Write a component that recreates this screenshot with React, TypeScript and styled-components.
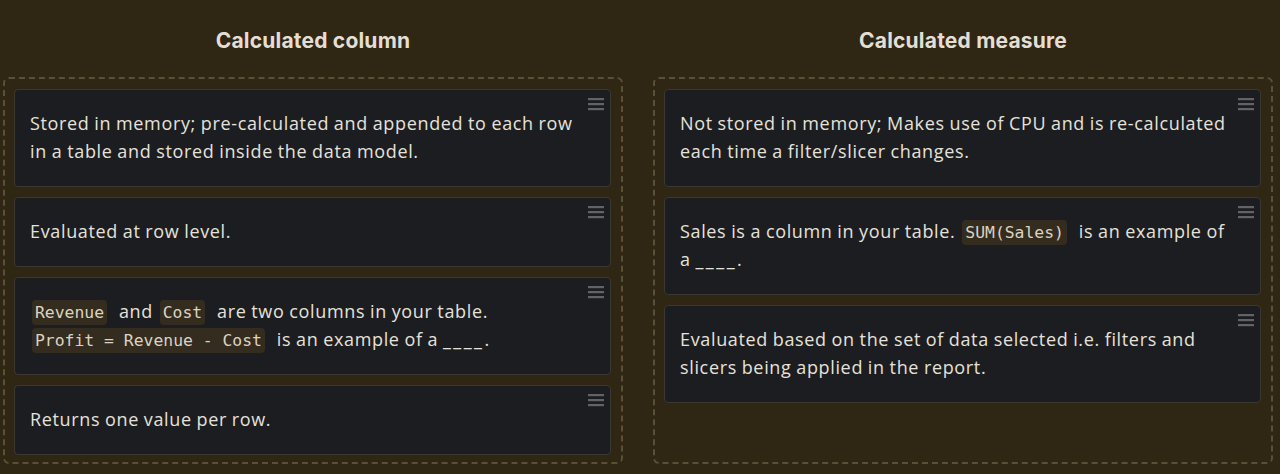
import React from "react";
import styled, { createGlobalStyle } from "styled-components";

const Global = createGlobalStyle`
  html, body { margin: 0; padding: 0; background: #2f2714; }
  body { width: 1280px; height: 474px; overflow: hidden; }
`;

const Page = styled.div`
  display: grid;
  grid-template-columns: 620px 620px;
  column-gap: 30px;
  padding: 0 7px 0 3px;
  box-sizing: border-box;
  width: 1280px;
  height: 474px;
  background: #2f2714;
  font-family: "Open Sans", "Noto Sans", sans-serif;
`;

const Column = styled.section`
  display: flex;
  flex-direction: column;
`;

const Heading = styled.h2`
  margin: 0;
  height: 77px;
  padding-top: 28px;
  box-sizing: border-box;
  text-align: center;
  font-family: Inter, "Noto Sans", sans-serif;
  font-weight: 700;
  font-size: 21px;
  line-height: 26px;
  letter-spacing: 0.2px;
  color: #e4dfd4;
`;

const DropZone = styled.div`
  border: 2px dashed #5a4f37;
  border-radius: 6px;
  padding: 10px 10px 9px 9px;
  height: 387px;
  box-sizing: border-box;
  display: flex;
  flex-direction: column;
  gap: 10px;
`;

const Card = styled.div`
  position: relative;
  background: #1c1d20;
  border: 1px solid #3a3830;
  border-radius: 4px;
  padding: 19px 24px 21px 15px;
  color: #e6e2da;
  font-size: 18px;
  letter-spacing: 0.65px;
  word-spacing: -0.5px;
  line-height: 28px;
`;

const Handle = styled.svg`
  position: absolute;
  top: 7px;
  right: 6px;
  width: 16px;
  height: 14px;
`;

const Code = styled.code`
  font-family: "DejaVu Sans Mono", "Liberation Mono", monospace;
  font-size: 16.4px;
  line-height: 1;
  letter-spacing: 0;
  word-spacing: 0;
  white-space: nowrap;
  color: #dcd3c2;
  background: #342c1e;
  border-radius: 4px;
  padding: 3px 3px;
  margin: 0 7px 0 2px;
`;

const Blank = styled.span`
  letter-spacing: 2.5px;
`;

const DragHandle = () => (
  <Handle viewBox="0 0 16 14">
    <rect x="0" y="1" width="16" height="2.2" fill="#626366" />
    <rect x="0" y="6" width="16" height="2.2" fill="#626366" />
    <rect x="0" y="11" width="16" height="2.2" fill="#626366" />
  </Handle>
);

const Item = ({ children }: { children: React.ReactNode }) => (
  <Card>
    <DragHandle />
    {children}
  </Card>
);

export default function App() {
  return (
    <>
      <Global />
      <Page>
        <Column>
          <Heading>Calculated column</Heading>
          <DropZone>
            <Item>
              Stored in memory; pre-calculated and appended to each row in a table and stored
              inside the data model.
            </Item>
            <Item>Evaluated at row level.</Item>
            <Item>
              <Code>Revenue</Code> and <Code>Cost</Code> are two columns in your table.{" "}
              <Code>Profit = Revenue - Cost</Code> is an example of a <Blank>____</Blank>.
            </Item>
            <Item>Returns one value per row.</Item>
          </DropZone>
        </Column>
        <Column>
          <Heading>Calculated measure</Heading>
          <DropZone>
            <Item>
              Not stored in memory; Makes use of CPU and is re-calculated each time a
              filter/slicer changes.
            </Item>
            <Item>
              Sales is a column in your table. <Code>SUM(Sales)</Code> is an example of a{" "}
              <Blank>____</Blank>.
            </Item>
            <Item>
              Evaluated based on the set of data selected i.e. filters and slicers being applied
              in the report.
            </Item>
          </DropZone>
        </Column>
      </Page>
    </>
  );
}
